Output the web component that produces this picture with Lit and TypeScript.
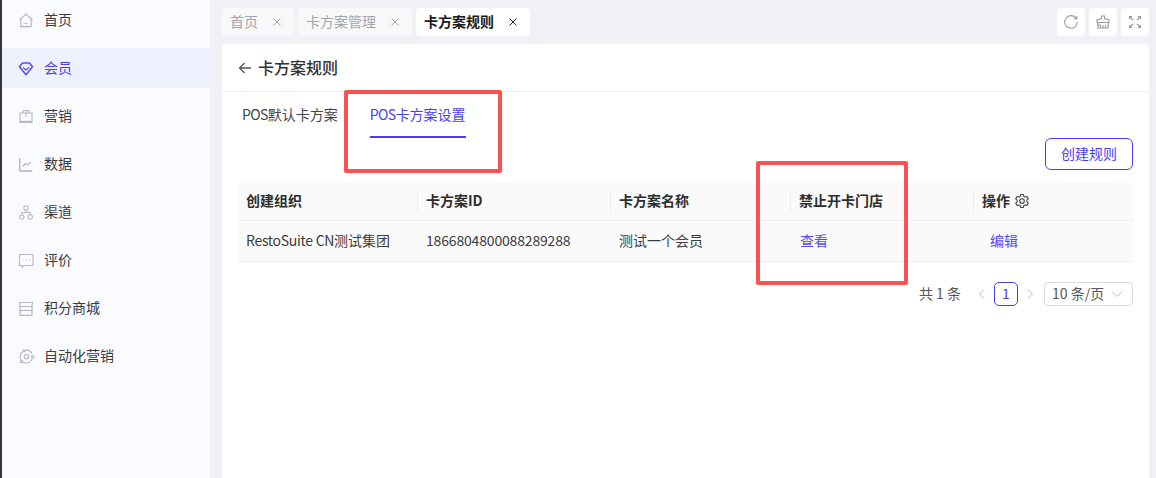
import { LitElement, html, css, svg } from "lit";
import { customElement } from "lit/decorators.js";

const icons: Record<string, unknown> = {
  home: svg`<path d="M3.500 9 10 3l6.500 6M4.800 8v7.500h10.400V8"/><path d="M8.500 12.500h3"/><path d="M4.800 15.600h10.400" stroke-width="1.500"/>`,
  member: svg`<path d="M6.500 4h7l3 3.800L10 15.800 3.500 7.800z" stroke-width="1.500" stroke-linejoin="round"/><path d="M7 8.500l3 2.500 3-2.500" stroke-width="1.300"/>`,
  market: svg`<path d="M4 6h12v9.500H4z"/><path d="M7 6V3.500h6V6M10 3.500V10"/><path d="M4 14.800h12" stroke-width="2"/>`,
  data: svg`<path d="M3.700 3v13h12.600" stroke-width="1.400"/><path d="M6.500 11.500 9.500 8.500l2 1.500 3.500-3"/>`,
  channel: svg`<rect x="8" y="3" width="4" height="4" rx="1"/><rect x="3.800" y="12" width="4" height="4" rx="1"/><rect x="12.200" y="12" width="4" height="4" rx="1"/><path d="M10 7v2.500M5.800 12V9.500h8.400V12"/>`,
  review: svg`<path d="M3.500 3.500h13.500V14.500H8L6 16.300v-1.800H3.500z"/><path d="M7 9h.9M10 9h.9M13 9h.9"/>`,
  shop: svg`<path d="M3.500 3.500h13l-.5 4H4zM4 7.500v8.800h12V7.500M4 11.500h12" stroke-width="1.200"/>`,
  auto: svg`<path d="M9 3.300a6.400 6.400 0 0 1 7 3.500M16.500 11.500a6.400 6.400 0 0 1-9.500 3.500M5 13a6.400 6.400 0 0 1 2-8.500"/><circle cx="10.500" cy="9.500" r="2.300"/><circle cx="8" cy="3.800" r="1"/><circle cx="16.800" cy="9.500" r="1.300"/><circle cx="5.500" cy="14.500" r="1.300"/>`,
};

const nav = [
  ["home", "首页"], ["member", "会员"], ["market", "营销"], ["data", "数据"],
  ["channel", "渠道"], ["review", "评价"], ["shop", "积分商城"], ["auto", "自动化营销"],
];

@customElement("app-root")
export class AppRoot extends LitElement {
  static styles = css`
    :host { display: block; width: 1156px; height: 478px; position: relative; overflow: hidden;
      font-family: "Noto Sans CJK SC", "Noto Sans", sans-serif; font-size: 14px; color: #333; background: #f0f1f5; }
    * { box-sizing: border-box; }
    .t { display: block; padding-bottom: 2px; }
    .lat { letter-spacing: -0.3px; }
    .pos { letter-spacing: -0.6px; }
    .num { letter-spacing: -0.17px; }
    .page { display: flex; height: 478px; }
    .strip { width: 2px; background: #36373b; flex: none; }
    .side { width: 208px; flex: none; background: #fafbfe; display: flex; flex-direction: column; gap: 8px; }
    .nav { height: 40px; display: flex; align-items: center; padding-left: 14px; gap: 9px; color: #3a3a3e; flex: none; }
    .nav svg { width: 19px; height: 19px; fill: none; stroke: #b8b8bc; stroke-width: 1.1; flex: none; }
    .nav.on { background: #eff0fd; color: #4a3df0; }
    .nav.on svg { stroke: #5a4ff2; }
    .main { flex: 1; min-width: 0; padding: 8px 7px 0 12px; display: flex; flex-direction: column; gap: 8px; }
    .top { display: flex; height: 28px; gap: 4px; flex: none; }
    .tab { height: 28px; background: #f7f8fa; border-radius: 4px; display: flex; align-items: center; padding: 0 8px; color: #a6a6aa; }
    .tab .x { margin-left: 15px; width: 8px; height: 8px; stroke: #a6a6aa; stroke-width: 1; fill: none; margin-right: 5px; }
    .tab.on { background: #fff; color: #1a1a1a; font-weight: 600; }
    .tab.on .x { stroke: #222; }
    .tools { margin-left: auto; display: flex; gap: 4px; }
    .tool { width: 28px; height: 28px; background: #fff; border-radius: 4px; display: flex; align-items: center; justify-content: center; }
    .tool svg { width: 16px; height: 16px; fill: none; stroke: #9a9a9e; stroke-width: 1.1; }
    .card { flex: 1; background: #fff; border-radius: 4px 4px 0 0; min-height: 0; display: flex; flex-direction: column; }
    .head { height: 48px; flex: none; border-bottom: 1px solid #eeeef0; display: flex; align-items: center; padding-left: 16px; gap: 6px; font-size: 16px; font-weight: 500; color: #333; }
    .head svg { width: 14px; height: 14px; fill: none; stroke: #555; stroke-width: 1.3; flex: none; }
    .subtabs { display: flex; padding-left: 20px; gap: 32px; height: 46px; flex: none; }
    .sub { height: 46px; border-bottom: 2px solid transparent; padding-top: 12px; line-height: 20px; color: #44444a; }
    .sub.on { color: #4a3df0; border-bottom-color: #4a3df0; }
    .bar { display: flex; justify-content: flex-end; padding: 0 16px; flex: none; }
    .btn { width: 88px; height: 32px; border: 1px solid #4a3df0; border-radius: 6px; color: #4a3df0; display: flex; align-items: center; justify-content: center; background: #fff; }
    .table { margin: 12px 16px 0; flex: none; }
    .row { display: grid; grid-template-columns: 179px 193px 180px 183px 160px; align-items: center; }
    .th { height: 39px; background: #fafafa; border-bottom: 1px solid #eeeef0; border-radius: 4px 4px 0 0; font-weight: 600; color: #2e2e2e; }
    .th > div { height: 22px; padding-left: 8px; display: flex; align-items: center; gap: 4px; }
    .th > div + div { border-left: 1px solid #eeeef0; }
    .th svg { width: 16px; height: 16px; fill: none; stroke: #444; stroke-width: 1.1; flex: none; }
    .td { height: 41px; background: #fafafa; border-bottom: 1px solid #eeeef0; color: #3c3c40; }
    .td > div { padding-left: 9px; padding-bottom: 2px; line-height: 20px; white-space: nowrap; }
    .td > div:first-child { padding-left: 8px; }
    .link { color: #5548f2; }
    .td .see { padding-left: 10px; }
    .td .op { padding-left: 17px; }
    .pager { display: flex; justify-content: flex-end; align-items: center; margin: 20px 16px 0; gap: 4px; color: #55555a; flex: none; height: 24px; }
    .total { margin-right: 9px; }
    .arrow { width: 16px; height: 16px; fill: none; stroke: #bcbcc0; stroke-width: 1; flex: none; }
    .pg { width: 24px; height: 24px; border: 1px solid #4a3df0; border-radius: 5px; color: #4a3df0; display: flex; align-items: center; justify-content: center; }
    .size { width: 89px; height: 24px; border: 1px solid #dcdcdf; border-radius: 4px; display: flex; align-items: center; padding-left: 7px; gap: 7px; margin-left: 2px; color: #55555a; }
    .size svg { width: 12px; height: 12px; fill: none; stroke: #bcbcc0; stroke-width: 1; flex: none; }
    .mark { position: absolute; border: 4px solid #fa5252; border-radius: 2px; pointer-events: none; }
    .m1 { left: 344px; top: 90px; width: 158px; height: 83px; }
    .m2 { left: 756px; top: 161px; width: 152px; height: 124px; }
  `;

  render() {
    const x = svg`<path d="M.5.5l7 7M7.500.5l-7 7"/>`;
    return html`<div class="page">
      <div class="strip"></div>
      <aside class="side">
        ${nav.map(([k, t]) => html`<div class="nav ${k === "member" ? "on" : ""}">
          <svg viewBox="0 0 19 19">${icons[k]}</svg><span class="t">${t}</span></div>`)}
      </aside>
      <main class="main">
        <div class="top">
          <div class="tab"><span class="t">首页</span><svg class="x" viewBox="0 0 8 8">${x}</svg></div>
          <div class="tab"><span class="t">卡方案管理</span><svg class="x" viewBox="0 0 8 8">${x}</svg></div>
          <div class="tab on"><span class="t">卡方案规则</span><svg class="x" viewBox="0 0 8 8">${x}</svg></div>
          <div class="tools">
            <div class="tool"><svg viewBox="0 0 16 16"><path d="M13.300 4.500A6.300 6.300 0 1 0 14.300 8M13.800 2V4.800H11"/></svg></div>
            <div class="tool"><svg viewBox="0 0 16 16"><path d="M6.500 4.500V2h3v2.500L14 6v2.500H2V6zM2.800 8.500V14h10.400V8.500M2.800 11h2.700M5.500 11v3M8 11v3M10.500 11v3"/></svg></div>
            <div class="tool"><svg viewBox="0 0 16 16"><path d="M3 3l3 3M13 3l-3 3M3 13l3-3M13 13l-3-3" stroke-width="1.300"/><path d="M2.500 5V2.500H5M13.500 5V2.500H11M2.500 11v2.500H5M13.500 11v2.500H11"/></svg></div>
          </div>
        </div>
        <section class="card">
          <div class="head"><svg viewBox="0 0 14 14"><path d="M13 7H1.500M6.500 2 1.500 7l5 5"/></svg><span class="t">卡方案规则</span></div>
          <div class="subtabs"><div class="sub"><span class="pos">POS</span>默认卡方案</div><div class="sub on"><span class="pos">POS</span>卡方案设置</div></div>
          <div class="bar"><div class="btn"><span class="t">创建规则</span></div></div>
          <div class="table">
            <div class="row th">
              <div><span class="t">创建组织</span></div><div><span class="t">卡方案ID</span></div><div><span class="t">卡方案名称</span></div><div><span class="t">禁止开卡门店</span></div>
              <div><span class="t">操作</span><svg viewBox="0 0 16 16"><path d="M6.600 1.500h2.800l.4 1.900 1.300.7 1.800-.6 1.400 2.400-1.400 1.300v1.600l1.400 1.300-1.400 2.400-1.800-.6-1.300.7-.4 1.900H6.600l-.4-1.900-1.300-.7-1.800.6-1.400-2.400 1.400-1.300V7.200L1.700 5.900l1.400-2.400 1.800.6 1.300-.7z" stroke-linejoin="round"/><circle cx="8" cy="8" r="2.300"/></svg></div>
            </div>
            <div class="row td">
              <div><span class="lat">RestoSuite CN</span>测试集团</div><div class="num">1866804800088289288</div><div>测试一个会员</div>
              <div class="link see">查看</div><div class="link op">编辑</div>
            </div>
          </div>
          <div class="pager">
            <span class="total t">共 1 条</span>
            <svg class="arrow" viewBox="0 0 16 16"><path d="M10 3.500 5.500 8l4.500 4.500"/></svg>
            <div class="pg"><span class="t">1</span></div>
            <svg class="arrow" viewBox="0 0 16 16"><path d="M6 3.500 10.500 8 6 12.500"/></svg>
            <div class="size"><span class="t">10 条/页</span><svg viewBox="0 0 12 12"><path d="M1 3.500 6 8.500l5-5"/></svg></div>
          </div>
        </section>
      </main>
    </div>
    <div class="mark m1"></div>
    <div class="mark m2"></div>`;
  }
}
